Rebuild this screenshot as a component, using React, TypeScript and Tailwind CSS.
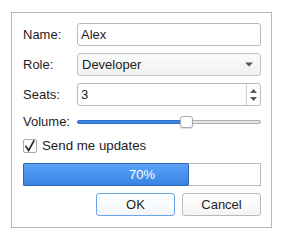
import React from 'react'

const font = { fontFamily: '"Liberation Sans", Arial, sans-serif' }

export default function App() {
  return (
    <div className="w-[284px] h-[240px] bg-white text-[13px] text-[#1d1d1d] pt-[12px] pl-[11px]" style={font}>
      <div className="w-[261px] h-[216px] border border-[#b8b8b8] pt-[10px] pl-[11px] pr-[10px] flex flex-col">
        {/* Name */}
        <div className="flex items-center h-[23px]">
          <span className="w-[54px] shrink-0">Name:</span>
          <div className="flex-1 h-full border border-[#b9b9b9] rounded-[3px] bg-white flex items-center pl-[3px]">Alex</div>
        </div>

        {/* Role */}
        <div className="flex items-center h-[23px] mt-[7px]">
          <span className="w-[54px] shrink-0">Role:</span>
          <div className="flex-1 h-full border border-[#c4c4c4] rounded-[3px] bg-gradient-to-b from-[#fbfbfb] to-[#f1f1f1] flex items-center pl-[4px] pr-[7px]">
            <span className="flex-1">Developer</span>
            <svg width="8" height="5" viewBox="0 0 8 5"><path d="M0 0.5h8L4 4.5z" fill="#555" /></svg>
          </div>
        </div>

        {/* Seats */}
        <div className="flex items-center h-[23px] mt-[7px]">
          <span className="w-[54px] shrink-0">Seats:</span>
          <div className="flex-1 h-full border border-[#b9b9b9] rounded-[3px] bg-white flex items-stretch">
            <span className="flex-1 flex items-center pl-[3px]">3</span>
            <div className="w-[14px] border-l border-[#d0d0d0] flex flex-col items-center justify-center gap-[4px]">
              <svg width="7" height="4" viewBox="0 0 7 4"><path d="M0 4h7L3.5 0z" fill="#555" /></svg>
              <svg width="7" height="4" viewBox="0 0 7 4"><path d="M0 0h7L3.5 4z" fill="#555" /></svg>
            </div>
          </div>
        </div>

        {/* Volume */}
        <div className="flex items-center h-[16px] mt-[8px]">
          <span className="w-[54px] shrink-0">Volume:</span>
          <div className="flex-1 relative h-full flex items-center">
            <div className="flex-1 h-[4px] rounded-full border border-[#b0b0b0] bg-[#e4e4e4]" />
            <div className="absolute left-0 w-[104px] h-[4px] rounded-l-full bg-[#3c84e4] border border-[#2f6fc7]" />
            <div className="absolute left-[103px] top-[2px] w-[13px] h-[12px] rounded-[3px] bg-white border border-[#a9a9a9] shadow-[0_1px_1px_rgba(0,0,0,0.15)]" />
          </div>
        </div>

        {/* Checkbox */}
        <div className="flex items-center h-[14px] mt-[9px]">
          <div className="w-[14px] h-[14px] border border-[#a9a9a9] rounded-[2px] bg-white flex items-center justify-center">
            <svg width="12" height="12" viewBox="0 0 12 12">
              <path d="M2 6.5L4.6 10.5L9.8 1" fill="none" stroke="#222" strokeWidth="1.6" strokeLinecap="square" />
            </svg>
          </div>
          <span className="ml-[5px] text-[13.3px]">Send me updates</span>
        </div>

        {/* Progress */}
        <div className="relative h-[23px] mt-[10px] border border-[#b9b9b9] bg-white flex">
          <div className="w-[166px] -my-px -ml-px h-[23px] rounded-[2px] border border-[#2a63b8] bg-gradient-to-b from-[#5ba3f8] to-[#3882e3]" />
          <span className="absolute inset-0 flex items-center justify-center text-white">70%</span>
        </div>

        {/* Buttons */}
        <div className="flex justify-end gap-[7px] mt-[7px]">
          <button className="w-[79px] h-[23px] rounded-[3px] border border-[#6aa5ec] bg-gradient-to-b from-white to-[#f3f6fa] text-[#1d1d1d]">OK</button>
          <button className="w-[79px] h-[23px] rounded-[3px] border border-[#b9b9b9] bg-gradient-to-b from-white to-[#f4f4f4] text-[#1d1d1d]">Cancel</button>
        </div>
      </div>
    </div>
  )
}
